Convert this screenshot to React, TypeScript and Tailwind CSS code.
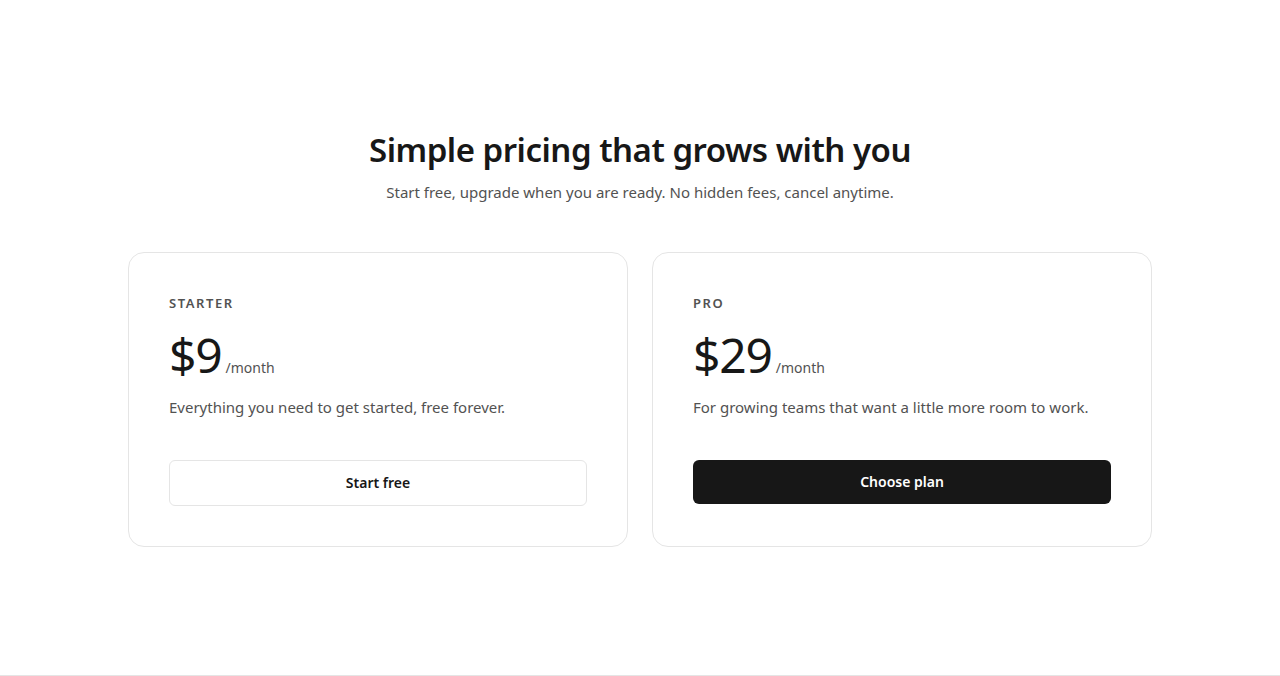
const plans = [
  {
    name: 'Starter',
    price: '$9',
    blurb: 'Everything you need to get started, free forever.',
    cta: 'Start free',
    primary: false,
  },
  {
    name: 'Pro',
    price: '$29',
    blurb: 'For growing teams that want a little more room to work.',
    cta: 'Choose plan',
    primary: true,
  },
];

export default function App() {
  return (
    <div className="bg-white font-['Noto_Sans',sans-serif] text-[#171717]">
      <section className="border-b border-[#e5e5e5] px-4 py-32">
        <div className="mx-auto max-w-5xl">
          <div className="text-center">
            <h1 className="pt-1 text-[33px] font-semibold leading-9 tracking-[-0.015em]">
              Simple pricing that grows with you
            </h1>
            <p className="mt-3 text-[15px] leading-6 text-[#525252]">
              Start free, upgrade when you are ready. No hidden fees, cancel anytime.
            </p>
          </div>

          <div className="mt-12 grid grid-cols-2 gap-6">
            {plans.map((p) => (
              <div key={p.name} className="rounded-2xl border border-[#e5e5e5] p-10">
                <h3 className="text-[13px] font-semibold uppercase leading-5 tracking-[0.12em] text-[#525252]">
                  {p.name}
                </h3>
                <div className="mt-4 flex items-baseline gap-1">
                  <span className="text-5xl leading-[52px] font-normal tracking-tight">{p.price}</span>
                  <span className="text-sm text-[#525252]">/month</span>
                </div>
                <p className="mt-[14px] text-[15px] leading-6 text-[#525252]">{p.blurb}</p>
                {p.primary ? (
                  <button className="mt-[41px] h-11 w-full rounded-md bg-[#171717] text-sm font-semibold text-white">
                    {p.cta}
                  </button>
                ) : (
                  <button className="mt-[41px] h-[46px] w-full rounded-md border border-[#e5e5e5] bg-white text-sm font-semibold text-[#171717]">
                    {p.cta}
                  </button>
                )}
              </div>
            ))}
          </div>
        </div>
      </section>
    </div>
  );
}
